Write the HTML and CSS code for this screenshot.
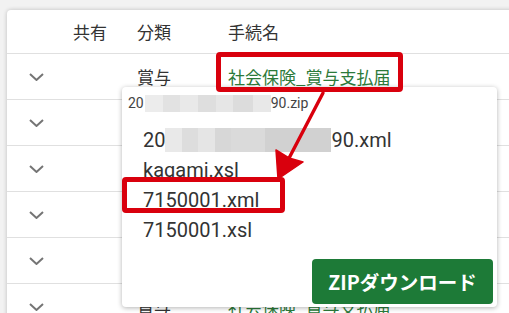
FILE: index.html
```html
<!DOCTYPE html>
<html lang="ja">
<head>
<meta charset="utf-8">
<link rel="stylesheet" href="styles.css">
</head>
<body>
<div class="card">
  <div class="row head">
    <div></div>
    <div>共有</div>
    <div>分類</div>
    <div>手続名</div>
  </div>
  <div class="row">
    <div class="chev"><svg viewBox="0 0 15 8" width="15" height="8"><path d="M1 1l6.5 6L14 1" fill="none" stroke="#757575" stroke-width="2"/></svg></div>
    <div></div>
    <div>賞与</div>
    <div class="link">社会保険_賞与支払届</div>
  </div>
  <div class="row">
    <div class="chev"><svg viewBox="0 0 15 8" width="15" height="8"><path d="M1 1l6.5 6L14 1" fill="none" stroke="#757575" stroke-width="2"/></svg></div>
    <div></div><div></div><div></div>
  </div>
  <div class="row">
    <div class="chev"><svg viewBox="0 0 15 8" width="15" height="8"><path d="M1 1l6.5 6L14 1" fill="none" stroke="#757575" stroke-width="2"/></svg></div>
    <div></div><div></div><div></div>
  </div>
  <div class="row">
    <div class="chev"><svg viewBox="0 0 15 8" width="15" height="8"><path d="M1 1l6.5 6L14 1" fill="none" stroke="#757575" stroke-width="2"/></svg></div>
    <div></div><div></div><div></div>
  </div>
  <div class="row">
    <div class="chev"><svg viewBox="0 0 15 8" width="15" height="8"><path d="M1 1l6.5 6L14 1" fill="none" stroke="#757575" stroke-width="2"/></svg></div>
    <div></div><div></div><div></div>
  </div>
  <div class="row">
    <div class="chev"><svg viewBox="0 0 15 8" width="15" height="8"><path d="M1 1l6.5 6L14 1" fill="none" stroke="#757575" stroke-width="2"/></svg></div>
    <div></div>
    <div>賞与</div>
    <div class="link">社会保険_賞与支払届</div>
  </div>
</div>

<div class="popup">
  <div class="zipname">20<span class="blur blur-sm"></span>90.zip</div>
  <ul class="files">
    <li>20<span class="blur blur-lg"></span>90.xml</li>
    <li>kagami.xsl</li>
    <li>7150001.xml</li>
    <li>7150001.xsl</li>
  </ul>
  <div class="actions">
    <button class="zip-btn">ZIPダウンロード</button>
  </div>
</div>

<div class="mark mark-link"></div>
<div class="mark mark-file"></div>
<svg class="arrow" width="509" height="313" viewBox="0 0 509 313">
  <line x1="323" y1="93" x2="287" y2="162" stroke="#d9000d" stroke-width="3.4" stroke-linecap="round"/>
  <path d="M278 179 L276 150 L289 158 L303 162 Z" fill="#d9000d" stroke="#d9000d" stroke-width="1.5" stroke-linejoin="round"/>
</svg>
</body>
</html>
```

FILE: styles.css
```css
html, body {
  margin: 0;
  padding: 0;
}
body {
  width: 509px;
  height: 313px;
  overflow: hidden;
  background: #f2f2f2;
  font-family: "Noto Sans CJK JP", "Noto Sans", sans-serif;
  color: #333;
  position: relative;
}
.card {
  margin: 10px -12px 0 7px;
  background: #fff;
  border-radius: 4px 0 0 0;
  box-shadow: 0 0 4px rgba(0, 0, 0, 0.22);
}
.row {
  display: grid;
  grid-template-columns: 66px 64px 91px 1fr;
  align-items: center;
  height: 45px;
  border-bottom: 1px solid #e0e0e0;
  font-size: 17px;
  line-height: 1;
}
.row.head {
  height: 43px;
}
.chev {
  padding-left: 22px;
  display: flex;
  align-items: center;
}
.chev svg {
  display: block;
}
.link {
  color: #2c7a3a;
}
.popup {
  position: absolute;
  left: 122px;
  top: 87px;
  width: 375px;
  height: 220px;
  background: #fff;
  border-radius: 4px;
  box-shadow: 0 1px 5px rgba(0, 0, 0, 0.3);
  display: flex;
  flex-direction: column;
  font-family: Roboto, "Noto Sans", sans-serif;
  color: #333;
}
.zipname {
  padding: 8px 0 0 6px;
  font-size: 14px;
  line-height: 17px;
  display: flex;
  align-items: center;
  color: #444;
}
.blur {
  display: inline-block;
}
.blur-sm {
  width: 126px;
  height: 17px;
  margin-left: 1px;
  background: linear-gradient(90deg, #ececec 0 14%, #e2e2e2 14% 28%, #e9e9e9 28% 42%, #dedede 42% 56%, #e6e6e6 56% 70%, #dcdcdc 70% 86%, #e8e8e8 86% 100%);
}
.blur-lg {
  width: 166px;
  height: 24px;
  background: linear-gradient(90deg, #e9e9e9 0 10%, #dddddd 10% 20%, #e5e5e5 20% 30%, #d7d7d7 30% 40%, #dadada 40% 60%, #d1d1d1 60% 100%);
}
.files {
  list-style: none;
  margin: 13px 0 0;
  padding: 0 0 0 21px;
}
.files li {
  font-size: 20px;
  line-height: 30px;
  height: 30px;
  display: flex;
  align-items: center;
}
.actions {
  margin-top: auto;
  display: flex;
  justify-content: flex-end;
  padding: 0 4px 3px 0;
}
.zip-btn {
  width: 181px;
  height: 45px;
  border: none;
  border-radius: 4px;
  background: #1d7a37;
  color: #fff;
  font-family: "Noto Sans CJK JP", sans-serif;
  font-weight: 700;
  font-size: 19.5px;
  padding: 0;
}
.mark {
  position: absolute;
  border: 5px solid #d9000d;
  border-radius: 4px;
  box-sizing: border-box;
}
.mark-link {
  left: 216px;
  top: 52px;
  width: 187px;
  height: 40px;
}
.mark-file {
  left: 122px;
  top: 177px;
  width: 163px;
  height: 36px;
}
.arrow {
  position: absolute;
  left: 0;
  top: 0;
  pointer-events: none;
}
```
